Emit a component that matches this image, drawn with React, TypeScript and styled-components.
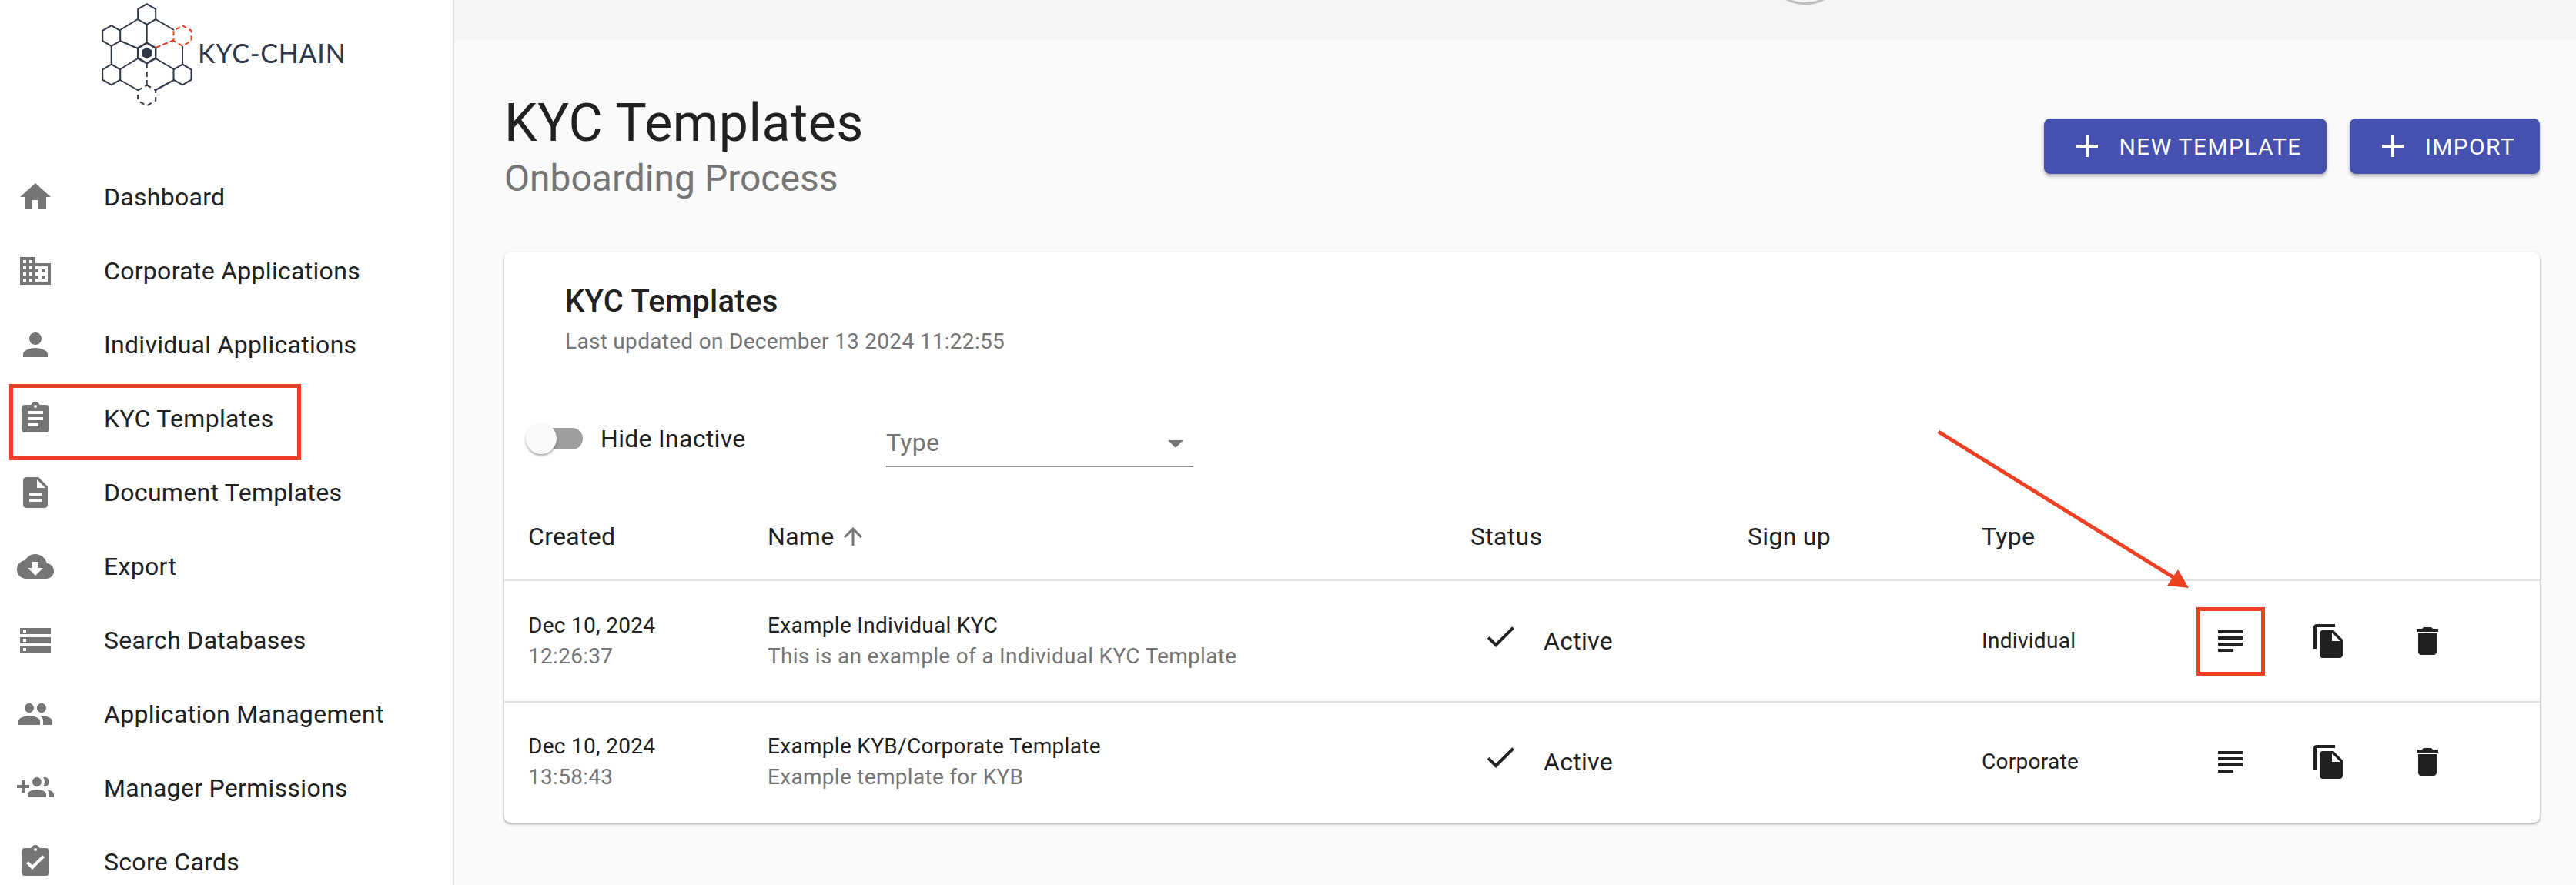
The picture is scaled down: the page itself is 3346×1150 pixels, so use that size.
import React from "react";
import styled, { createGlobalStyle } from "styled-components";

const GlobalStyle = createGlobalStyle`
  html, body {
    margin: 0;
    padding: 0;
    width: 3346px;
    height: 1150px;
    overflow: hidden;
    background: #fafafa;
    font-family: Roboto, "Liberation Sans", sans-serif;
    color: #212121;
    letter-spacing: 0.3px;
  }
`;

const RED = "#ee4023";

const icons = {
  home: "M10 20v-6h4v6h5v-8h3L12 3 2 12h3v8z",
  business:
    "M12 7V3H2v18h20V7H12zM6 19H4v-2h2v2zm0-4H4v-2h2v2zm0-4H4V9h2v2zm0-4H4V5h2v2zm4 12H8v-2h2v2zm0-4H8v-2h2v2zm0-4H8V9h2v2zm0-4H8V5h2v2zm10 12h-8v-2h2v-2h-2v-2h2v-2h-2V9h8v10zm-2-8h-2v2h2v-2zm0 4h-2v2h2v-2z",
  person:
    "M12 12c2.21 0 4-1.79 4-4s-1.79-4-4-4-4 1.79-4 4 1.79 4 4 4zm0 2c-2.67 0-8 1.34-8 4v2h16v-2c0-2.66-5.33-4-8-4z",
  assignment:
    "M19 3h-4.18C14.4 1.84 13.3 1 12 1c-1.3 0-2.4.84-2.82 2H5c-1.1 0-2 .9-2 2v14c0 1.1.9 2 2 2h14c1.1 0 2-.9 2-2V5c0-1.1-.9-2-2-2zm-7 0c.55 0 1 .45 1 1s-.45 1-1 1-1-.45-1-1 .45-1 1-1zm2 14H7v-2h7v2zm3-4H7v-2h10v2zm0-4H7V7h10v2z",
  description:
    "M14 2H6c-1.1 0-1.99.9-1.99 2L4 20c0 1.1.89 2 1.99 2H18c1.1 0 2-.9 2-2V8l-6-6zm2 16H8v-2h8v2zm0-4H8v-2h8v2zm-3-5V3.5L18.5 9H13z",
  cloud:
    "M19.35 10.04C18.67 6.59 15.64 4 12 4 9.11 4 6.6 5.64 5.35 8.04 2.34 8.36 0 10.91 0 14c0 3.31 2.69 6 6 6h13c2.76 0 5-2.24 5-5 0-2.64-2.05-4.78-4.65-4.96zM17 13l-5 5-5-5h3V9h4v4h3z",
  storage:
    "M2 20h20v-4H2v4zm2-3h2v2H4v-2zM2 4v4h20V4H2zm4 3H4V5h2v2zm-4 7h20v-4H2v4zm2-3h2v2H4v-2z",
  people:
    "M16 11c1.66 0 2.99-1.34 2.99-3S17.66 5 16 5c-1.66 0-3 1.34-3 3s1.34 3 3 3zm-8 0c1.66 0 2.99-1.34 2.99-3S9.66 5 8 5C6.34 5 5 6.34 5 8s1.34 3 3 3zm0 2c-2.33 0-7 1.17-7 3.5V19h14v-2.5c0-2.33-4.67-3.5-7-3.5zm8 0c-.29 0-.62.02-.97.05 1.16.84 1.97 1.97 1.97 3.45V19h6v-2.5c0-2.33-4.67-3.5-7-3.5z",
  groupAdd:
    "M8 10H5V7H3v3H0v2h3v3h2v-3h3v-2zm10 1c1.66 0 2.99-1.34 2.99-3S19.66 5 18 5c-.32 0-.63.05-.91.14.57.81.9 1.79.9 2.86s-.34 2.04-.9 2.86c.28.09.59.14.91.14zm-5 0c1.66 0 2.99-1.34 2.99-3S14.66 5 13 5c-1.66 0-3 1.34-3 3s1.34 3 3 3zm6.62 2.16c.83.73 1.38 1.66 1.38 2.84v2h3v-2c0-1.54-2.37-2.49-4.38-2.84zM13 13c-2 0-6 1-6 3v2h12v-2c0-2-4-3-6-3z",
  assignmentDone:
    "M19 3h-4.18C14.4 1.84 13.3 1 12 1c-1.3 0-2.4.84-2.82 2H5c-1.1 0-2 .9-2 2v14c0 1.1.9 2 2 2h14c1.1 0 2-.9 2-2V5c0-1.1-.9-2-2-2zm-7 0c.55 0 1 .45 1 1s-.45 1-1 1-1-.45-1-1 .45-1 1-1zm-2 14l-4-4 1.41-1.41L10 14.17l6.59-6.59L18 9l-8 8z",
  add: "M19 13h-6v6h-2v-6H5v-2h6V5h2v6h6v2z",
  check: "M9 16.17L4.83 12l-1.42 1.41L9 19 21 7l-1.41-1.41z",
  subject: "M14 17H4v2h10v-2zm6-8H4v2h16V9zM4 15h16v-2H4v2zM4 5v2h16V5H4z",
  fileCopy:
    "M16 1H4c-1.1 0-2 .9-2 2v14h2V3h12V1zm-1 4l6 6v10c0 1.1-.9 2-2 2H7.99C6.89 23 6 22.1 6 21l.01-14c0-1.1.89-2 1.99-2h7zm-1 7h5.5L14 6.5V12z",
  trash: "M6 19c0 1.1.9 2 2 2h8c1.1 0 2-.9 2-2V7H6v12zM19 4h-3.5l-1-1h-5l-1 1H5v2h14V4z",
  arrowUp: "M4 12l1.41 1.41L11 7.83V20h2V7.83l5.58 5.59L20 12l-8-8-8 8z",
};

type IconName = keyof typeof icons;

const Svg = styled.svg`
  width: 48px;
  height: 48px;
  flex: none;
  display: block;
  fill: currentColor;
`;

const Icon = ({ name }: { name: IconName }) => (
  <Svg viewBox="0 0 24 24">
    <path d={icons[name]} />
  </Svg>
);

const hexPoints = (cx: number, cy: number, r = 13.3) =>
  [0, 1, 2, 3, 4, 5]
    .map((i) => {
      const a = (Math.PI / 3) * i - Math.PI / 2;
      return `${(cx + r * Math.cos(a)).toFixed(1)},${(cy + r * Math.sin(a)).toFixed(1)}`;
    })
    .join(" ");

const Logo = () => (
  <LogoSvg viewBox="120 0 340 150">
    <g fill="none" stroke="#2f3848" strokeWidth="2">
      <polygon points={hexPoints(190.7, 18.5)} />
      <polygon points={hexPoints(144.7, 46.5)} />
      <polygon points={hexPoints(144.7, 97)} />
      <polygon points={hexPoints(237, 97)} />
      <polygon points={hexPoints(190.7, 69)} strokeWidth="2.5" />
      <line x1="190.7" y1="32" x2="190.7" y2="56" />
      <line x1="202" y1="25" x2="226" y2="39" />
      <line x1="179" y1="25" x2="156" y2="39" />
      <line x1="156" y1="53" x2="179" y2="63" />
      <line x1="144.7" y1="60" x2="144.7" y2="84" />
      <line x1="156" y1="90" x2="179" y2="76" />
      <line x1="202" y1="76" x2="226" y2="90" />
      <line x1="237" y1="60" x2="237" y2="84" />
      <line x1="156" y1="104" x2="179" y2="117" />
      <line x1="226" y1="104" x2="202" y2="117" />
      <line x1="190.7" y1="82" x2="190.7" y2="110" strokeDasharray="7 4" />
      <polygon points={hexPoints(190.7, 124)} strokeDasharray="6 5" />
    </g>
    <polygon points={hexPoints(190.7, 69, 7.5)} fill="#2f3848" />
    <g fill="none" stroke={RED} strokeWidth="2">
      <polygon points={hexPoints(237, 46.5)} strokeDasharray="6 4" />
      <line x1="202" y1="62" x2="226" y2="52" strokeDasharray="7 3" />
    </g>
    <text x="257" y="82" fontFamily="Lato, sans-serif" fontSize="34" fill="#2f3848" textLength="192" lengthAdjust="spacing">
      KYC-CHAIN
    </text>
  </LogoSvg>
);

const nav: { label: string; icon: IconName; marked?: boolean }[] = [
  { label: "Dashboard", icon: "home" },
  { label: "Corporate Applications", icon: "business" },
  { label: "Individual Applications", icon: "person" },
  { label: "KYC Templates", icon: "assignment", marked: true },
  { label: "Document Templates", icon: "description" },
  { label: "Export", icon: "cloud" },
  { label: "Search Databases", icon: "storage" },
  { label: "Application Management", icon: "people" },
  { label: "Manager Permissions", icon: "groupAdd" },
  { label: "Score Cards", icon: "assignmentDone" },
];

const rows = [
  {
    date: "Dec 10, 2024",
    time: "12:26:37",
    name: "Example Individual KYC",
    desc: "This is an example of a Individual KYC Template",
    type: "Individual",
    marked: true,
  },
  {
    date: "Dec 10, 2024",
    time: "13:58:43",
    name: "Example KYB/Corporate Template",
    desc: "Example template for KYB",
    type: "Corporate",
    marked: false,
  },
];

export default function App() {
  return (
    <Page>
      <GlobalStyle />
      <Sidebar>
        <LogoBox>
          <Logo />
        </LogoBox>
        <NavList>
          {nav.map((n) => (
            <NavItem key={n.label} $marked={n.marked}>
              <NavIcon>
                <Icon name={n.icon} />
              </NavIcon>
              {n.label}
            </NavItem>
          ))}
        </NavList>
      </Sidebar>
      <Main>
        <TopBar>
          <Avatar />
        </TopBar>
        <Content>
          <Header>
            <div>
              <Title>KYC Templates</Title>
              <Subtitle>Onboarding Process</Subtitle>
            </div>
            <Buttons>
              <Button>
                <Icon name="add" />
                NEW TEMPLATE
              </Button>
              <Button>
                <Icon name="add" />
                IMPORT
              </Button>
            </Buttons>
          </Header>
          <Card>
            <CardHead>
              <CardTitle>KYC Templates</CardTitle>
              <Updated>Last updated on December 13 2024 11:22:55</Updated>
            </CardHead>
            <Filters>
              <Toggle>
                <Track />
                <Thumb />
              </Toggle>
              <ToggleLabel>Hide Inactive</ToggleLabel>
              <Select>
                Type
                <Caret />
              </Select>
            </Filters>
            <HeadRow>
              <span>Created</span>
              <NameHead>
                Name
                <SortIcon>
                  <Icon name="arrowUp" />
                </SortIcon>
              </NameHead>
              <span>Status</span>
              <span>Sign up</span>
              <span>Type</span>
            </HeadRow>
            {rows.map((r) => (
              <Row key={r.time}>
                <Stack>
                  <Primary>{r.date}</Primary>
                  <Secondary>{r.time}</Secondary>
                </Stack>
                <Stack>
                  <Primary>{r.name}</Primary>
                  <Secondary>{r.desc}</Secondary>
                </Stack>
                <Status>
                  <StatusIcon>
                    <Icon name="check" />
                  </StatusIcon>
                  Active
                </Status>
                <span />
                <Primary>{r.type}</Primary>
                <Actions>
                  <Action $marked={r.marked}>
                    <Icon name="subject" />
                  </Action>
                  <Action>
                    <Icon name="fileCopy" />
                  </Action>
                  <Action>
                    <Icon name="trash" />
                  </Action>
                </Actions>
              </Row>
            ))}
          </Card>
        </Content>
      </Main>
      <Callout viewBox="0 0 3346 1150">
        <line x1="2518" y1="561" x2="2826" y2="752" stroke={RED} strokeWidth="5" />
        <polygon points="2843,764 2829,740 2815,761" fill={RED} />
      </Callout>
    </Page>
  );
}

const Page = styled.div`
  position: relative;
  display: flex;
  width: 3346px;
  height: 1150px;
  overflow: hidden;
`;

const Sidebar = styled.aside`
  width: 590px;
  flex: none;
  box-sizing: border-box;
  background: #fff;
  border-right: 2px solid #e0e0e0;
`;

const LogoBox = styled.div`
  height: 208px;
`;

const LogoSvg = styled.svg`
  display: block;
  width: 340px;
  height: 150px;
  margin-left: 120px;
`;

const NavList = styled.nav`
  display: flex;
  flex-direction: column;
`;

const NavItem = styled.div<{ $marked?: boolean }>`
  position: relative;
  display: flex;
  align-items: center;
  height: 96px;
  flex: none;
  padding-left: 22px;
  font-size: 32px;
  color: #212121;

  ${(p) =>
    p.$marked &&
    `&::after {
      content: "";
      position: absolute;
      left: 12px;
      top: 3px;
      width: 379px;
      height: 99px;
      box-sizing: border-box;
      border: 5px solid ${RED};
    }`}
`;

const NavIcon = styled.span`
  width: 113px;
  flex: none;
  color: #757575;
`;

const Main = styled.main`
  flex: 1;
  min-width: 0;
  display: flex;
  flex-direction: column;
`;

const TopBar = styled.div`
  position: relative;
  height: 52px;
  flex: none;
  background: #f5f5f5;
  overflow: hidden;
`;

const Avatar = styled.div`
  position: absolute;
  left: 1700px;
  top: -104px;
  width: 110px;
  height: 110px;
  box-sizing: border-box;
  border: 3px solid #bdbdbd;
  border-radius: 50%;
`;

const Content = styled.div`
  flex: 1;
  padding: 0 47px 0 65px;
`;

const Header = styled.div`
  display: flex;
  justify-content: space-between;
  height: 276px;
`;

const Title = styled.h1`
  margin: 68px 0 0;
  font-size: 68px;
  line-height: 80px;
  font-weight: 400;
  letter-spacing: 0.5px;
  color: #212121;
`;

const Subtitle = styled.div`
  margin-top: 4px;
  font-size: 48px;
  line-height: 56px;
  letter-spacing: 0;
  color: #757575;
`;

const Buttons = styled.div`
  display: flex;
  gap: 30px;
  margin-top: 102px;
`;

const Button = styled.button`
  display: flex;
  align-items: center;
  gap: 18px;
  height: 72px;
  padding: 0 32px;
  border: 0;
  border-radius: 8px;
  background: #4650ae;
  color: #fff;
  font-family: inherit;
  font-size: 30px;
  letter-spacing: 1.35px;
  box-shadow: 0 3px 4px rgba(0, 0, 0, 0.3);
`;

const Card = styled.section`
  height: 741px;
  box-sizing: border-box;
  background: #fff;
  border-radius: 8px;
  box-shadow: 0 2px 3px rgba(0, 0, 0, 0.32), 0 0 4px rgba(0, 0, 0, 0.06);
`;

const CardHead = styled.div`
  height: 184px;
  padding: 40px 0 0 79px;
  box-sizing: border-box;
`;

const CardTitle = styled.div`
  font-size: 40px;
  line-height: 48px;
  font-weight: 500;
  color: #212121;
`;

const Updated = styled.div`
  margin-top: 8px;
  font-size: 28px;
  line-height: 40px;
  color: #757575;
`;

const Filters = styled.div`
  display: flex;
  align-items: flex-start;
  height: 133px;
  padding-left: 28px;
`;

const Toggle = styled.div`
  position: relative;
  width: 74px;
  height: 40px;
  margin-top: 38px;
`;

const Track = styled.div`
  position: absolute;
  left: 6px;
  top: 6px;
  width: 68px;
  height: 28px;
  border-radius: 14px;
  background: #9e9e9e;
`;

const Thumb = styled.div`
  position: absolute;
  left: 0;
  top: 0;
  width: 40px;
  height: 40px;
  border-radius: 50%;
  background: #fafafa;
  box-shadow: 0 2px 3px rgba(0, 0, 0, 0.35);
`;

const ToggleLabel = styled.div`
  width: 371px;
  margin: 39px 0 0 23px;
  font-size: 32px;
  line-height: 38px;
  color: #212121;
`;

const Select = styled.div`
  position: relative;
  width: 399px;
  height: 63px;
  margin-top: 32px;
  box-sizing: border-box;
  padding-top: 12px;
  border-bottom: 2px solid #8f8f8f;
  font-size: 32px;
  line-height: 38px;
  color: #757575;
`;

const Caret = styled.span`
  position: absolute;
  right: 13px;
  top: 28px;
  border-left: 10px solid transparent;
  border-right: 10px solid transparent;
  border-top: 10px solid #757575;
`;

const columns = "311px 913px 360px 304px 350px 1fr";

const HeadRow = styled.div`
  display: grid;
  grid-template-columns: ${columns};
  align-items: center;
  height: 110px;
  box-sizing: border-box;
  padding: 0 0 4px 31px;
  border-bottom: 2px solid #e0e0e0;
  font-size: 32px;
  color: #212121;
`;

const NameHead = styled.span`
  display: flex;
  align-items: center;
`;

const SortIcon = styled.span`
  margin-left: 7px;
  color: #757575;

  svg {
    width: 36px;
    height: 36px;
  }
`;

const Row = styled.div`
  display: grid;
  grid-template-columns: ${columns};
  align-items: center;
  height: 156px;
  box-sizing: border-box;
  padding-left: 31px;

  & + & {
    border-top: 2px solid #e0e0e0;
  }
`;

const Stack = styled.div`
  display: flex;
  flex-direction: column;
`;

const Primary = styled.div`
  font-size: 28px;
  line-height: 40px;
  color: #212121;
`;

const Secondary = styled.div`
  font-size: 28px;
  line-height: 40px;
  color: #757575;
`;

const Status = styled.div`
  display: flex;
  align-items: center;
  padding-left: 15px;
  font-size: 32px;
  color: #212121;
`;

const StatusIcon = styled.span`
  margin: -12px 32px 0 0;
`;

const Actions = styled.div`
  display: flex;
  margin-left: -91px;
`;

const Action = styled.span<{ $marked?: boolean }>`
  position: relative;
  width: 128px;
  display: flex;
  justify-content: center;
  color: #212121;

  ${(p) =>
    p.$marked &&
    `&::after {
      content: "";
      position: absolute;
      left: 20px;
      top: -20px;
      width: 89px;
      height: 89px;
      box-sizing: border-box;
      border: 5px solid ${RED};
    }`}
`;

const Callout = styled.svg`
  position: absolute;
  left: 0;
  top: 0;
  width: 3346px;
  height: 1150px;
  pointer-events: none;
`;
